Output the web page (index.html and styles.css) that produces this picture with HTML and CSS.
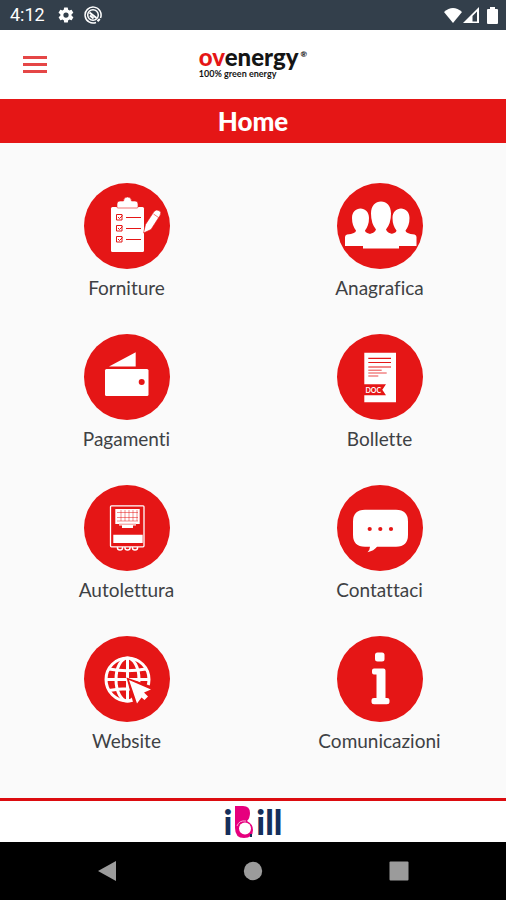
FILE: index.html
```html
<!DOCTYPE html>
<html lang="it">
<head>
<meta charset="utf-8">
<meta name="viewport" content="width=device-width, initial-scale=1">
<title>ovenergy - Home</title>
<link rel="stylesheet" href="styles.css">
</head>
<body>
<div class="status">
  <div class="status-group">
    <span class="clock">4:12</span>
    <svg class="status-icon" width="18" height="18" viewBox="0 0 24 24" aria-hidden="true"><path fill="#fff" d="M19.4 13a7.500 7.500 0 0 0 0-2l2.100-1.700a.5.5 0 0 0 .1-.6l-2-3.500a.5.5 0 0 0-.6-.2l-2.500 1a7.300 7.300 0 0 0-1.700-1l-.4-2.600a.5.5 0 0 0-.5-.4h-4a.5.5 0 0 0-.5.4L9 5a7.700 7.700 0 0 0-1.700 1l-2.500-1a.5.5 0 0 0-.6.200l-2 3.500a.5.5 0 0 0 .1.600L4.500 11a8 8 0 0 0 0 2l-2.100 1.700a.5.5 0 0 0-.1.600l2 3.500c.1.200.4.300.6.200l2.500-1c.5.400 1.100.7 1.700 1l.4 2.600c0 .2.200.4.500.4h4c.2 0 .5-.2.500-.4l.4-2.600a7.300 7.300 0 0 0 1.700-1l2.500 1c.2.100.5 0 .6-.2l2-3.500a.5.5 0 0 0-.1-.6zM12 15.500a3.500 3.500 0 1 1 0-7 3.500 3.500 0 0 1 0 7z"/></svg>
    <svg class="status-icon" width="18" height="18" viewBox="0 0 18 18" aria-hidden="true"><g fill="none" stroke="#fff" stroke-width="1.500"><path d="M12 16.500A8 8 0 1 1 16.500 12"/><circle cx="9" cy="9" r="5.300"/><path d="M5.500 6.500l7 5.500M6 9.500l3.500 3M15.800 13l-2.300 2.300" stroke-width="2"/></g></svg>
  </div>
  <div class="status-group status-right">
    <svg width="20" height="17" viewBox="0 0 20 17" aria-hidden="true"><path fill="#fff" d="M1 5Q10-3 19 5L10 16z"/></svg>
    <svg width="16" height="17" viewBox="0 0 16 17" aria-hidden="true"><path fill="#fff" fill-rule="evenodd" d="M0 16L16 0v16zM9.500 9v5.500h4.500V4.600z"/></svg>
    <svg class="battery" width="11" height="17" viewBox="0 0 11 17" aria-hidden="true"><path fill="#fff" d="M3 0h5v2h2q1 0 1 1v13q0 1-1 1H1q-1 0-1-1V3q0-1 1-1h2z"/></svg>
  </div>
</div>

<header class="header">
  <button class="menu" type="button" aria-label="Menu"><span class="bar"></span><span class="bar"></span><span class="bar"></span></button>
  <div class="brand">
    <div class="brand-name"><span class="brand-red">ov</span>energy<sup class="brand-mark">®</sup></div>
    <div class="brand-tag">100% green energy</div>
  </div>
</header>

<h1 class="title">Home</h1>

<main class="grid">
  <a class="tile" href="#forniture">
    <svg class="disc" viewBox="0 0 86 86" aria-hidden="true">
      <rect x="27" y="24" width="33" height="45" rx="1.500" fill="#fff"/>
      <path fill="#fff" stroke="#e51616" stroke-width=".6" d="M36 18h3.500q0-4 4-4t4 4H51q3 0 3 3v3q0 1-1 1H34q-1 0-1-1v-3q0-3 3-3z"/>
      <g fill="none" stroke="#e51616" stroke-width="1"><path d="M32.500 31.500h5.500v5.500h-5.500zM32.500 42.500h5.500v5.500h-5.500zM32.500 53.500h5.500v5.500h-5.500zM42 34.500h15M42 45.500h15M42 56.500h15"/><path d="M34 34l1.500 1.500 3-3M34 45l1.500 1.500 3-3M34 56l1.500 1.500 3-3"/></g>
      <path fill="#fff" stroke="#e51616" stroke-width=".6" d="M59.500 50l2-8.500L70 28.500q2-2.500 5-1t1 5L67 46.500z"/>
      <path fill="none" stroke="#e51616" stroke-width=".6" d="M69.500 31l5 3.500"/>
    </svg>
    <span class="label">Forniture</span>
  </a>
  <a class="tile" href="#anagrafica">
    <svg class="disc" viewBox="0 0 86 86" aria-hidden="true">
      <path fill="#fff" d="M8 63V54q0-2 2-2.500 9-1 9-4-4-5-4-12.500c0-6 4-9.500 8.500-9.500S32 29 32 35q0 7.500-4 12.500 0 3 9 4V63z"/>
      <path fill="#fff" d="M79.500 63V54q0-2-2-2.500-9-1-9-4 4-5 4-12.500c0-6-4-9.500-8.500-9.500S55.500 29 55.500 35q0 7.500 4 12.500 0 3-9 4V63z"/>
      <path fill="#fff" d="M26 65.500V54q1-2 4-2.500 8-1 9-5-5-6-5-16c0-8 4.500-12 10-12s10 4 10 12q0 10-5 16 1 4 9 5 3 .5 4 2.500v11.500z"/>
    </svg>
    <span class="label">Anagrafica</span>
  </a>
  <a class="tile" href="#pagamenti">
    <svg class="disc" viewBox="0 0 86 86" aria-hidden="true">
      <path fill="#fff" d="M25 32.500L51.700 18.300v14.200z"/>
      <rect x="21" y="35" width="43.500" height="27" rx="1.500" fill="#fff"/>
      <circle cx="57.700" cy="48" r="3" fill="#e51616"/>
    </svg>
    <span class="label">Pagamenti</span>
  </a>
  <a class="tile" href="#bollette">
    <svg class="disc" viewBox="0 0 86 86" aria-hidden="true">
      <path fill="#fff" d="M27.300 18.700H59v49.600H27.300z"/>
      <path fill="none" stroke="#e51616" stroke-width="1.200" d="M31.300 24.300H54M31.300 28.500H54M31.300 33H54"/>
      <path fill="none" stroke="#e51616" stroke-width=".8" d="M31.300 36.200h13.400M31.300 39h18.400M31.300 42h10"/>
      <path fill="#e51616" d="M27 50.300h22l-3.700 5.500 3.700 5.500H27z"/>
      <text class="doc" x="28.500" y="58.500">DOC</text>
    </svg>
    <span class="label">Bollette</span>
  </a>
  <a class="tile" href="#autolettura">
    <svg class="disc" viewBox="0 0 86 86" aria-hidden="true">
      <rect x="26.500" y="20.800" width="33.500" height="41" rx="1" fill="none" stroke="#fff" stroke-width="1.300"/>
      <path fill="#fff" d="M31.300 24h24.400v15H52v1.500h-3V43H38v-2.500h-3V39h-3.700z"/>
      <path fill="none" stroke="#e51616" stroke-width=".5" d="M33 27.500h21M33 32.500h21M33 36h21M37 25v11M41 25v11M45 25v11M49 25v11M53 25v11M35 39.200h17"/>
      <path fill="#fff" d="M29.300 49.700h29.400V58H29.300z"/>
      <path fill="none" stroke="#fff" stroke-width="1.500" d="M33.500 62v1q0 2 2.500 2t2.500-2v-1M41 62v1q0 2 2.500 2t2.500-2v-1M48.500 62v1q0 2 2.500 2t2.500-2v-1"/>
    </svg>
    <span class="label">Autolettura</span>
  </a>
  <a class="tile" href="#contattaci">
    <svg class="disc" viewBox="0 0 86 86" aria-hidden="true">
      <path fill="#fff" d="M28 24.700h31q12 0 12 12v13q0 12-12 12H40q-3 4-9.500 5.500 2.500-2.500 2.500-5.500h-5q-12 0-12-12v-13q0-12 12-12z"/>
      <g fill="#e51616"><circle cx="32.700" cy="44" r="2.100"/><circle cx="43.300" cy="44" r="2.100"/><circle cx="54" cy="44" r="2.100"/></g>
    </svg>
    <span class="label">Contattaci</span>
  </a>
  <a class="tile" href="#website">
    <svg class="disc" viewBox="0 0 86 86" aria-hidden="true">
      <g fill="none" stroke="#fff" stroke-width="3"><circle cx="43.500" cy="43.500" r="21.500"/><ellipse cx="43.500" cy="43.500" rx="11.500" ry="21.500"/><path d="M43.500 22v43M22 43.500h43M25 33q18 3.500 37 0M25 54.500q18-3.500 37 0"/></g>
      <path fill="#e51616" d="M42.500 41.500L70 51v19H50z"/>
      <path fill="#fff" d="M45 44L67 53.500l-7 3 4 4-3.500 3.500-3-2.500-4.500 6z"/>
    </svg>
    <span class="label">Website</span>
  </a>
  <a class="tile" href="#comunicazioni">
    <svg class="disc" viewBox="0 0 86 86" aria-hidden="true">
      <rect x="38" y="16.500" width="9.500" height="9" rx="2.500" fill="#fff"/>
      <path fill="#fff" d="M37 32.500h9.500q2 0 2 2V62H50q2.500 0 2.500 2v2.300q0 2-2.500 2H37q-2.500 0-2.500-2V64q0-2 2.500-2h2.500V38.500H37q-2 0-2-2v-2q0-2 2-2z"/>
    </svg>
    <span class="label">Comunicazioni</span>
  </a>
</main>

<footer class="footer">
  <div class="ibill">
    <span>i</span>
    <svg width="20" height="32" viewBox="0 0 20 32" role="img" aria-label="B"><path fill="#e6007e" d="M1 0h8q7 0 7 7 0 5-3 8 6 3 6 9 0 8-9 8Q1 32 1 22z"/><circle cx="11" cy="22.500" r="6" fill="#fff"/><path fill="none" stroke="#f7a8d2" stroke-width="1" d="M3 20q2-6 9-5"/><path fill="#142f5b" d="M16 28h2v3h-2z"/></svg>
    <span>ill</span>
  </div>
</footer>

<nav class="nav" aria-label="Sistema">
  <button class="nav-button" type="button" aria-label="Indietro"><svg width="20" height="22" viewBox="0 0 20 22"><path fill="#9b9b9b" d="M1 11L19 1v20z"/></svg></button>
  <button class="nav-button" type="button" aria-label="Home"><svg width="20" height="20" viewBox="0 0 20 20"><circle cx="10" cy="10" r="9.200" fill="#9b9b9b"/></svg></button>
  <button class="nav-button" type="button" aria-label="Recenti"><svg width="20" height="20" viewBox="0 0 20 20"><rect x=".5" y=".5" width="19" height="19" rx="1" fill="#9b9b9b"/></svg></button>
</nav>
</body>
</html>
```
FILE: styles.css
```css
* {
  box-sizing: border-box;
}

body {
  margin: 0;
  min-height: 100vh;
  display: flex;
  flex-direction: column;
  background: #fafafa;
  font-family: Lato, sans-serif;
  font-variant-ligatures: none;
}

svg {
  display: block;
}

button {
  border: 0;
  padding: 0;
  background: none;
}

.status {
  display: flex;
  justify-content: space-between;
  align-items: center;
  height: 30px;
  padding: 0 8px 0 10px;
  background: #333f4b;
  color: #fff;
}

.status-group {
  display: flex;
  align-items: center;
  gap: 9px;
}

.status-right {
  gap: 0;
}

.battery {
  margin-left: 8px;
}

.clock {
  margin-right: 3px;
  font: 18px/30px Roboto, sans-serif;
}

.header {
  display: grid;
  grid-template-columns: 1fr auto 1fr;
  align-items: center;
  height: 69px;
  padding: 0 23px;
  background: #fff;
}

.menu {
  display: flex;
  flex-direction: column;
  gap: 4px;
  width: 24px;
}

.bar {
  height: 3px;
  background: #e54646;
}

.brand {
  padding-bottom: 6px;
  color: #151515;
}

.brand-name {
  font-size: 24px;
  font-weight: 900;
  line-height: 24px;
}

.brand-red {
  color: #e51616;
}

.brand-mark {
  margin-left: 2px;
  font-size: 8px;
  line-height: 0;
  vertical-align: 9px;
}

.brand-tag {
  font-size: 9px;
  font-weight: 700;
  line-height: 9px;
}

.title {
  margin: 0;
  background: #e51616;
  color: #fff;
  font-size: 26px;
  font-weight: 900;
  line-height: 44px;
  text-align: center;
}

.grid {
  flex: 1;
  display: grid;
  grid-template-columns: 1fr 1fr;
  align-content: start;
  row-gap: 34px;
  padding: 40px 0;
}

.tile {
  display: flex;
  flex-direction: column;
  align-items: center;
  gap: 7px;
  color: #3e4144;
  text-decoration: none;
}

.disc {
  width: 86px;
  height: 86px;
  border-radius: 50%;
  background: #e51616;
}

.label {
  font-size: 19px;
  line-height: 24px;
}

.doc {
  fill: #fff;
  font-size: 7px;
  font-weight: 700;
}

.footer {
  display: flex;
  justify-content: center;
  align-items: center;
  height: 44px;
  border-top: 3px solid #dc0c10;
  background: #fff;
}

.ibill {
  display: flex;
  align-items: center;
  gap: 2px;
  color: #142f5b;
  font-size: 34px;
  font-weight: 900;
  line-height: 32px;
}

.nav {
  display: grid;
  grid-template-columns: 1fr 1fr 1fr;
  height: 58px;
  padding: 0 34px;
  background: #000;
}

.nav-button {
  display: flex;
  justify-content: center;
  align-items: center;
}
```
